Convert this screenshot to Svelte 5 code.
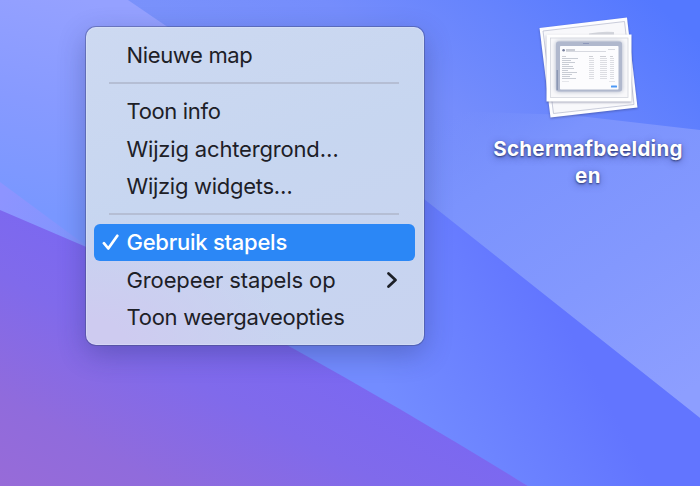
<script>
  const groups = [
    [{ label: 'Nieuwe map', width: 126 }],
    [
      { label: 'Toon info', width: 94 },
      { label: 'Wijzig achtergrond…', width: 212 },
      { label: 'Wijzig widgets…', width: 166 }
    ],
    [
      { label: 'Gebruik stapels', width: 160.5, checked: true },
      { label: 'Groepeer stapels op', width: 209, submenu: true },
      { label: 'Toon weergaveopties', width: 218 }
    ]
  ];

  const files = [26, 19, 23, 17, 21, 22, 16, 25, 20, 18, 24];

  function fit(node, width) {
    const natural = node.getBoundingClientRect().width;
    node.style.letterSpacing = `${(width - natural) / node.textContent.length}px`;
  }
</script>

<main class="desktop">
  <svg class="wallpaper" viewBox="0 0 700 486" aria-hidden="true">
    <defs>
      <linearGradient id="sky" gradientUnits="userSpaceOnUse" x1="410" y1="260" x2="640" y2="-10">
        <stop offset="0" stop-color="#7a92fb" />
        <stop offset=".4" stop-color="#758dfc" />
        <stop offset=".7" stop-color="#6583fd" />
        <stop offset="1" stop-color="#5478ff" />
      </linearGradient>
      <linearGradient id="corner" gradientUnits="userSpaceOnUse" x1="80" y1="0" x2="35" y2="210">
        <stop offset="0" stop-color="#95a1ff" />
        <stop offset=".5" stop-color="#879aff" />
        <stop offset="1" stop-color="#7997ff" />
      </linearGradient>
      <linearGradient id="glow" gradientUnits="userSpaceOnUse" x1="490" y1="90" x2="690" y2="390">
        <stop offset="0" stop-color="#7891fb" stop-opacity="0" />
        <stop offset=".22" stop-color="#7b93fd" />
        <stop offset=".6" stop-color="#8398fe" />
        <stop offset="1" stop-color="#8d9eff" />
      </linearGradient>
      <linearGradient id="band" gradientUnits="userSpaceOnUse" x1="390" y1="400" x2="560" y2="310">
        <stop offset="0" stop-color="#738cff" />
        <stop offset="1" stop-color="#6275ff" />
      </linearGradient>
      <linearGradient id="violet" gradientUnits="userSpaceOnUse" x1="0" y1="486" x2="150" y2="215">
        <stop offset="0" stop-color="#976bd8" />
        <stop offset=".25" stop-color="#906bdc" />
        <stop offset=".6" stop-color="#806aeb" />
        <stop offset="1" stop-color="#7867f4" />
      </linearGradient>
      <linearGradient id="edge" gradientUnits="userSpaceOnUse" x1="0" y1="200" x2="90" y2="240">
        <stop offset="0" stop-color="#8d94ff" />
        <stop offset="1" stop-color="#8095fd" />
      </linearGradient>
    </defs>
    <rect width="700" height="486" fill="url(#sky)" />
    <path d="M0 0H128L424 202V420L0 240Z" fill="url(#corner)" />
    <path d="M0 182L92 250L0 211Z" fill="url(#edge)" />
    <path d="M424 110L570 115L700 130V418L424 199Z" fill="url(#glow)" />
    <path d="M250 60L424 199L700 418V486H528L287 345L100 250Z" fill="url(#band)" />
    <path d="M0 210L84 246C150 276 220 308 287 345C370 391 450 438 528 486H0Z" fill="url(#violet)" />
  </svg>

  <div class="menu" role="menu">
    {#each groups as group, i}
      {#if i}<div class="separator" role="separator"></div>{/if}
      {#each group as item}
        <div class="item" class:selected={item.checked} role="menuitem">
          <span class="mark">
            {#if item.checked}
              <svg width="18" height="18" viewBox="0 0 18 18"><path d="M1.9 10.2L6.3 15.5L15.3 2.8" /></svg>
            {/if}
          </span>
          <span class="label" use:fit={item.width}>{item.label}</span>
          {#if item.submenu}
            <svg class="chevron" width="12" height="18" viewBox="0 0 12 18"><path d="M2.5 2.5L9.5 9L2.5 15.5" /></svg>
          {/if}
        </div>
      {/each}
    {/each}
  </div>

  <div class="stack">
    <svg class="papers" width="110" height="112" viewBox="530 12 110 112" aria-hidden="true">
      <g class="sheet">
        <path d="M539.5 28L627 17.5L637.5 107.5L550.5 117.5Z" fill="#fdfdff" />
        <path d="M543 31L624.5 21.5L634 104.5L553.5 113.5Z" fill="#f8f8fb" stroke="#bcc0d2" stroke-width=".8" />
        <path d="M589 33.5Q602 31 614 32V35H589Z" fill="#d3d5dc" />
      </g>
      <g class="sheet">
        <rect x="546.5" y="34.5" width="85" height="67" fill="#fff" />
        <rect x="550.5" y="38" width="77.5" height="59.5" fill="#f8f8fa" stroke="#d3d5dc" stroke-width=".8" />
      </g>
      <g class="shot">
        <rect x="556" y="41.5" width="66" height="50" rx="2.5" fill="#b0b8cd" />
      </g>
      <rect x="583" y="43" width="6" height="1" fill="#8d97ba" />
      <rect x="556.6" y="70" width="1.4" height="20" fill="#8a96b2" />
      <rect x="560" y="46" width="58.5" height="43.5" rx=".8" fill="#fcfcfe" />
      <circle cx="563.6" cy="50.2" r="1.3" fill="#777f9c" />
      <path d="M566 50H575" stroke="#9a9fae" stroke-width="1" />
      <path d="M566 51.5H606M608 49.5H615" stroke="#d3d5dc" stroke-width=".9" />
      <path d="M562 56.5H566M589 56.5H593M600 56.5H606M610 56.5H613" stroke="#c0c2c9" stroke-width=".8" />
      {#each files as width, i}
        <path d="M562 {58.5 + i * 2}H{552 + width}" stroke="#babfc9" stroke-width=".8" />
        <path d="M589 {58.5 + i * 2}H594M600 {58.5 + i * 2}H607M610 {58.5 + i * 2}H614" stroke="#dcdde2" stroke-width="1" />
      {/each}
      <path d="M562 81.5H569M609 81.5H615" stroke="#e5e6eb" stroke-width="1" />
      <rect x="611" y="85.6" width="6" height="2" rx=".5" fill="#4c98f5" />
    </svg>
    <div class="name">
      <span use:fit={189.5}>Schermafbeelding</span>
      <span use:fit={26}>en</span>
    </div>
  </div>
</main>

<style>
  :global(body) {
    margin: 0;
  }

  .desktop {
    position: relative;
    width: 700px;
    height: 486px;
    overflow: hidden;
    font-family: Inter, 'Liberation Sans', sans-serif;
  }

  .wallpaper {
    display: block;
    width: 700px;
    height: 486px;
  }

  .menu {
    position: absolute;
    left: 85.5px;
    top: 27px;
    box-sizing: border-box;
    width: 338px;
    height: 318px;
    padding: 9px 8.5px;
    border-radius: 10px;
    background:
      radial-gradient(ellipse 200px 130px at 0 100%, #cecbf0 20%, rgba(206, 203, 240, 0) 100%),
      linear-gradient(160deg, #cdd9f1 0%, #c7d6f0 45%, #c8d3f0 100%);
    box-shadow:
      inset 0 0 0 1px rgba(228, 235, 255, 0.35),
      0 0 0 1px rgba(65, 75, 125, 0.45),
      0 9px 28px rgba(35, 40, 95, 0.32);
    color: #1d2027;
    font-size: 22px;
  }

  .item {
    display: flex;
    align-items: center;
    height: 37.5px;
    box-sizing: border-box;
    padding-right: 17px;
    border-radius: 6px;
  }

  .selected {
    background: #2b87f6;
    color: #fff;
    font-weight: 500;
  }

  .mark {
    display: flex;
    width: 32.5px;
    box-sizing: border-box;
    padding-left: 8px;
  }

  .label {
    white-space: nowrap;
  }

  .item svg {
    fill: none;
    stroke: currentColor;
    stroke-width: 2.7;
    stroke-linecap: round;
    stroke-linejoin: round;
  }

  .item .chevron {
    margin-left: auto;
    stroke-width: 2.8;
  }

  .separator {
    height: 2px;
    margin: 8.25px 16px 8.5px 15px;
    background: #b5bed4;
  }

  .stack {
    position: absolute;
    left: 488px;
    top: 12px;
    width: 200px;
    display: flex;
    flex-direction: column;
    align-items: center;
  }

  .papers {
    margin-left: -6px;
  }

  .sheet {
    filter: drop-shadow(0 1px 1.2px rgba(35, 40, 85, 0.4));
  }

  .shot {
    filter: drop-shadow(0 0 2px #a7afc4);
  }

  .name {
    display: flex;
    flex-direction: column;
    align-items: center;
    margin-top: 10.5px;
    color: #fff;
    font-size: 20.5px;
    font-weight: 700;
    line-height: 27.5px;
    text-shadow:
      0 1px 2px rgba(20, 25, 70, 0.7),
      0 2px 7px rgba(35, 45, 110, 0.5);
  }
</style>
